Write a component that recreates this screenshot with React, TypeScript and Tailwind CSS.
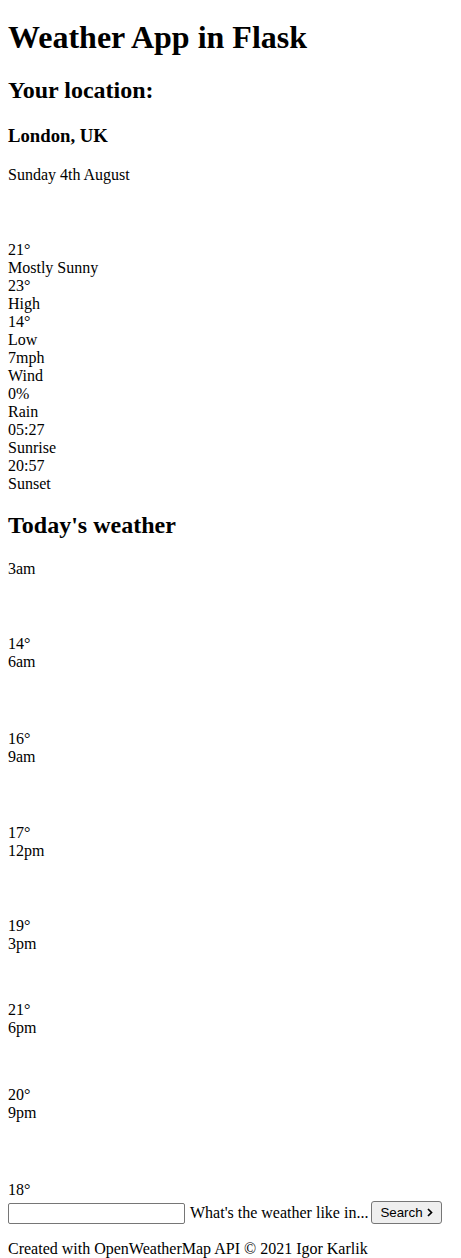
import React from "react";

const details = [
  ["23°", "High"],
  ["14°", "Low"],
  ["7mph", "Wind"],
  ["0%", "Rain"],
  ["05:27", "Sunrise"],
  ["20:57", "Sunset"],
];

// gap = room left by each hour's weather icon
const hours = [
  { time: "3am", temp: "14°", gap: "h-[57.5px]" },
  { time: "6am", temp: "16°", gap: "h-[58.5px]" },
  { time: "9am", temp: "17°", gap: "h-[58px]" },
  { time: "12pm", temp: "19°", gap: "h-[57px]" },
  { time: "3pm", temp: "21°", gap: "h-[48.5px]" },
  { time: "6pm", temp: "20°", gap: "h-[49px]" },
  { time: "9pm", temp: "18°", gap: "h-[58.5px]" },
];

export default function App() {
  return (
    <div className="bg-white min-h-screen">
      <div className="px-2 text-[16px] leading-[18px] text-black font-['Liberation_Serif','Times_New_Roman',serif] flow-root">
        <h1 className="mt-[18.5px] text-[32px] leading-[37px] font-bold">
          Weather App in Flask
        </h1>

        <h2 className="mt-[21.5px] text-[24px] leading-[27px] font-bold">
          Your location:
        </h2>

        <h3 className="mt-[21px] text-[18.72px] leading-[22px] font-bold">
          London, UK
        </h3>

        <p className="mt-[19px]">Sunday 4th August</p>

        {/* current weather icon placeholder */}
        <div className="h-[57px]" />

        <div>21°</div>
        <div>Mostly Sunny</div>
        {details.map(([value, label]) => (
          <div key={label}>
            <div>{value}</div>
            <div>{label}</div>
          </div>
        ))}

        <h2 className="mt-[19px] text-[24px] leading-[27px] font-bold">
          Today's weather
        </h2>

        <div className="mt-[20.5px]">
          {hours.map((h) => (
            <div key={h.time}>
              <div>{h.time}</div>
              <div className={h.gap} />
              <div>{h.temp}</div>
            </div>
          ))}
        </div>

        <form className="flex items-end h-[25px]" onSubmit={(e) => e.preventDefault()}>
          <input
            type="text"
            className="w-[177px] h-[21px] border border-[#767676] rounded-[2px] px-[2px] text-[13.33px] font-['Liberation_Sans',Arial,sans-serif]"
          />
          <span className="ml-[5px] mb-[2px]">What's the weather like in...</span>
          <button
            type="submit"
            className="ml-[3px] h-[22.5px] px-[8px] border border-[#767676] rounded-[3px] bg-[#efefef] text-[13.33px] leading-[15px] text-black font-['Liberation_Sans',Arial,sans-serif] flex items-center gap-[4px]"
          >
            Search
            <svg width="6" height="9" viewBox="0 0 6 9" fill="none">
              <path d="M1 1l3.5 3.5L1 8" stroke="#000" strokeWidth="1.7" />
            </svg>
          </button>
        </form>

        <p className="mt-[16px]">Created with OpenWeatherMap API © 2021 Igor Karlik</p>
      </div>
    </div>
  );
}
